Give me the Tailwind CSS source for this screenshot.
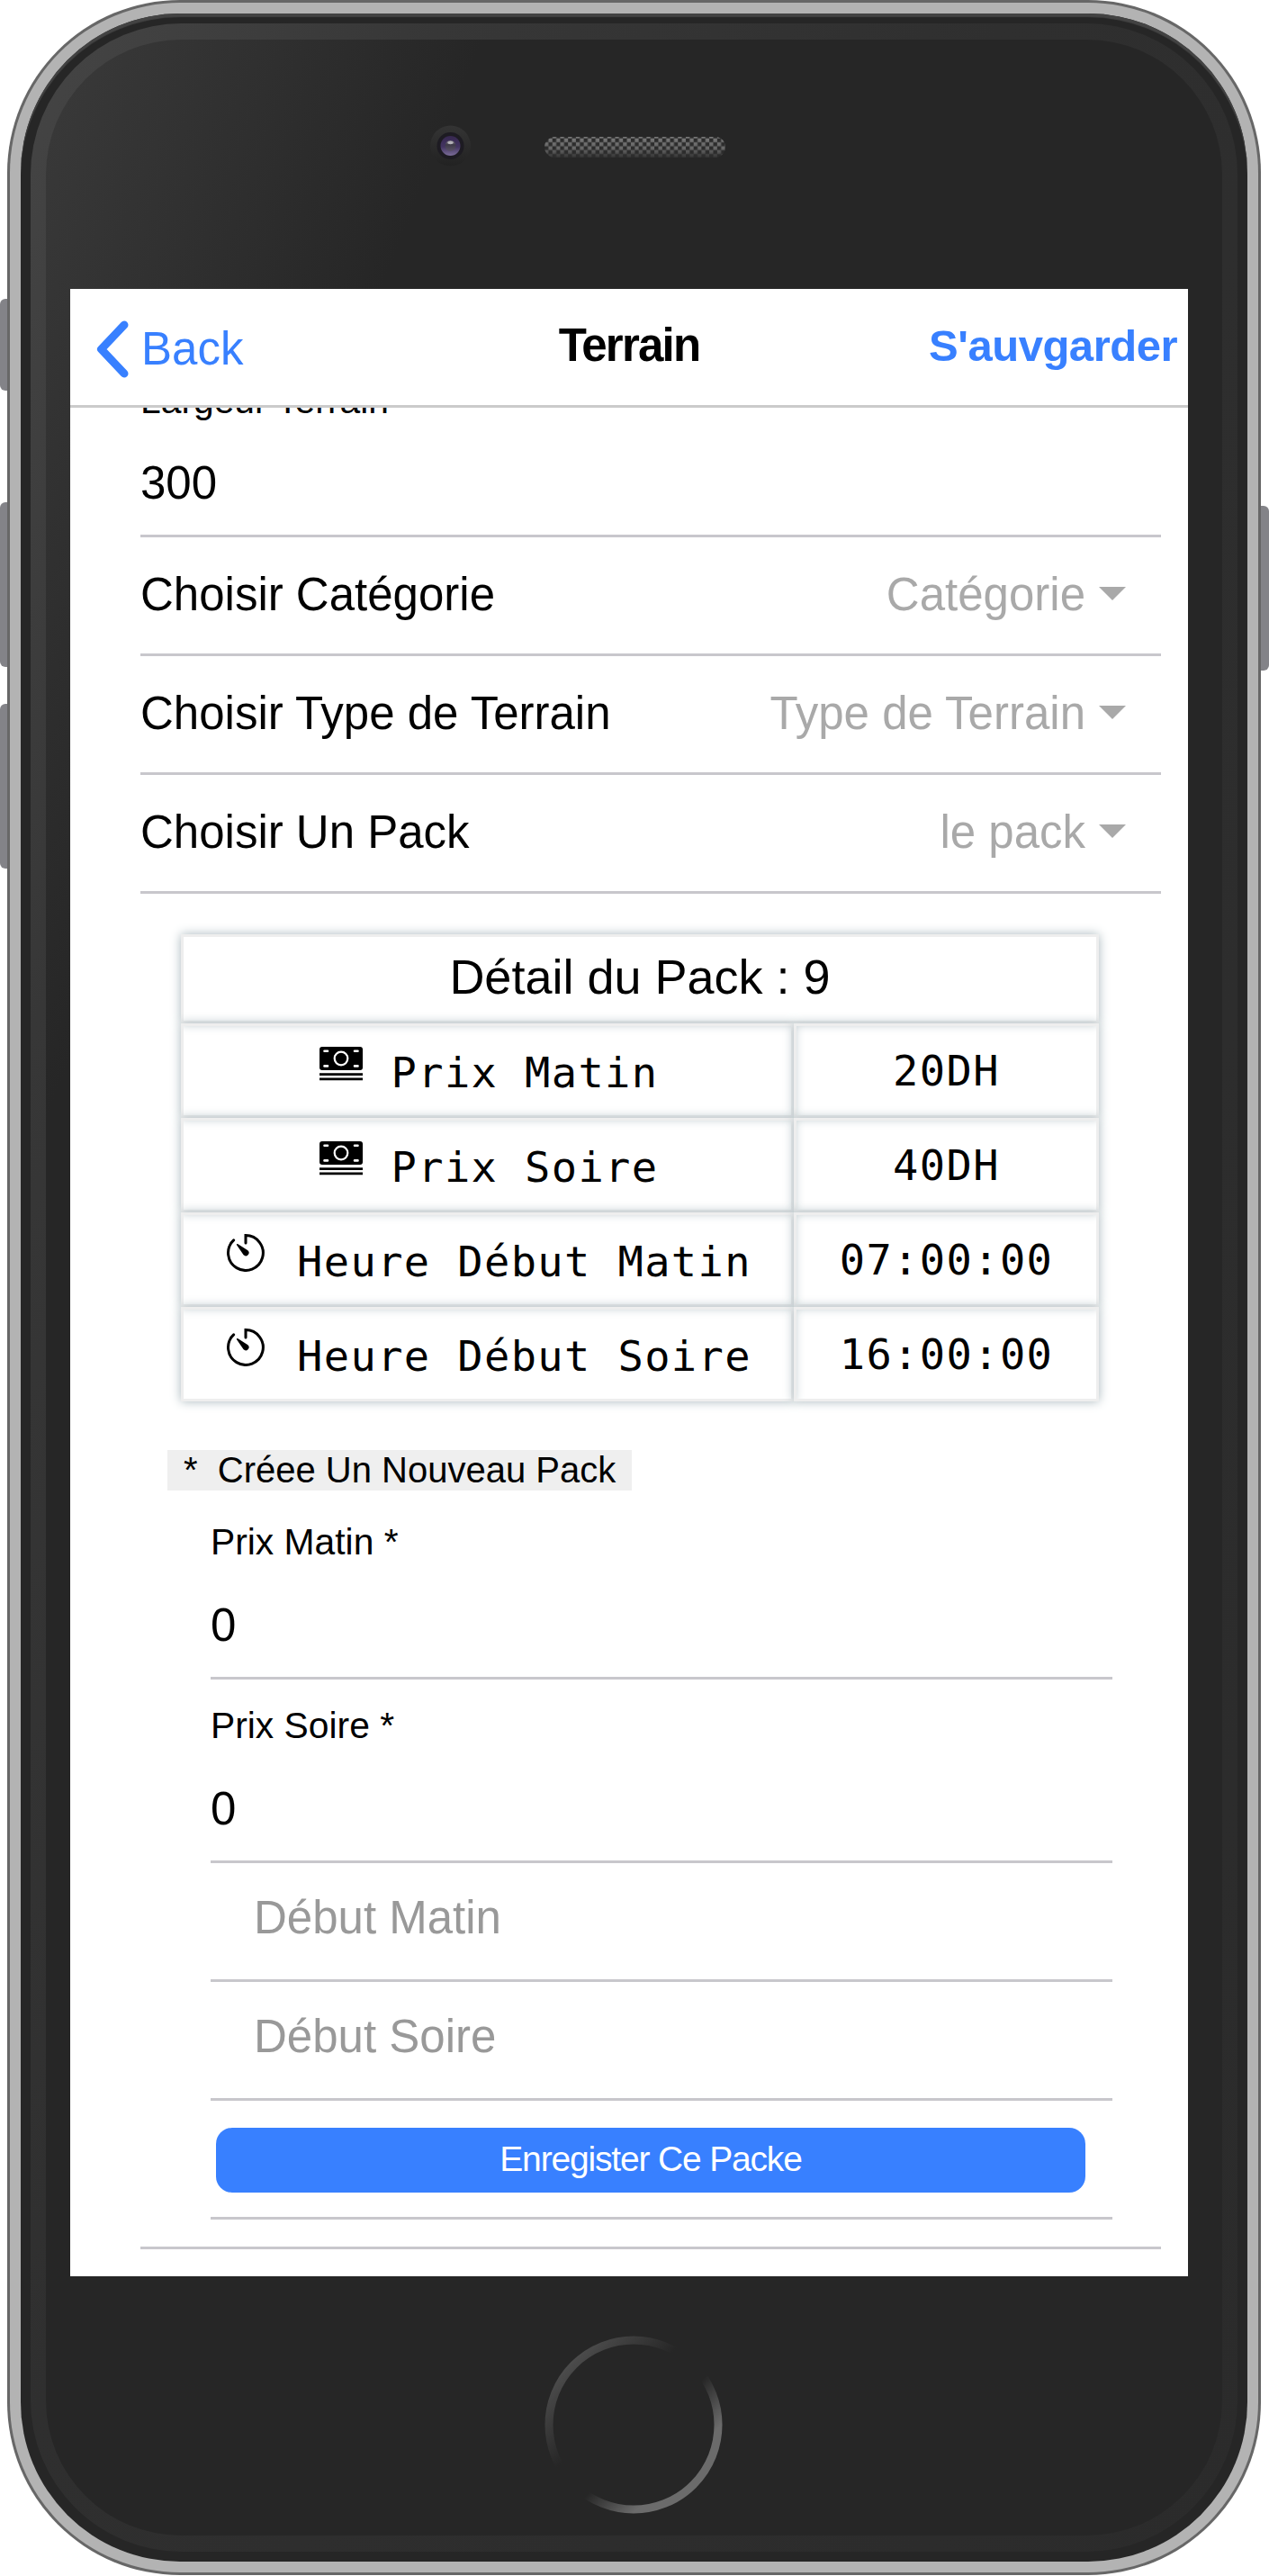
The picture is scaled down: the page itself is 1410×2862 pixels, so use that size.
<!DOCTYPE html>
<html lang="fr">
<head>
<meta charset="utf-8">
<title>Terrain</title>
<script src="https://cdn.jsdelivr.net/npm/@tailwindcss/browser@4"></script>
</head>
<body class="bg-white">
<div class="relative h-[2862px] w-[1410px] overflow-hidden pl-[8px]">
  <!-- side buttons -->
  <div class="absolute left-0 top-[332px] h-[102px] w-[20px] rounded-l-[6px] bg-[#838388]"></div>
  <div class="absolute left-0 top-[558px] h-[183px] w-[20px] rounded-l-[6px] bg-[#838388]"></div>
  <div class="absolute left-0 top-[782px] h-[183px] w-[20px] rounded-l-[6px] bg-[#838388]"></div>
  <div class="absolute right-0 top-[562px] h-[183px] w-[20px] rounded-r-[6px] bg-[#838388]"></div>

  <!-- phone body -->
  <div class="relative h-[2861px] w-[1393px] rounded-[192px] bg-[#676767] p-[3px]">
    <div class="h-full rounded-[189px] bg-[#b3b3b3] p-[12px]">
      <div class="h-full rounded-[177px] bg-[#262626] p-[11px] shadow-[inset_0_4px_1px_#434343]">
        <div class="h-full rounded-[168px] bg-[linear-gradient(112deg,#454545_0px,#373737_420px,#2f2f2f_1000px,#2b2b2b_100%)] px-[17px] py-[18px]">
          <div class="flex h-full flex-col rounded-[150px] bg-[linear-gradient(112deg,#3a3a3a_0px,#262626_450px)]">
            <!-- camera and speaker -->
            <svg class="h-[277px] w-[1306px] shrink-0" viewBox="51 44 1306 277">
              <defs>
                <linearGradient id="rim" x1="0" y1="0" x2="0" y2="1"><stop offset="0" stop-color="#343434"/><stop offset="1" stop-color="#222"/></linearGradient>
                <linearGradient id="lens" x1="0" y1="0" x2="0" y2="1"><stop offset="0" stop-color="#36274f"/><stop offset=".55" stop-color="#433461"/><stop offset="1" stop-color="#7b6d99"/></linearGradient>
                <linearGradient id="pupil" x1="0" y1="0" x2="0" y2="1"><stop offset="0" stop-color="#77737f"/><stop offset=".4" stop-color="#3e3a48"/><stop offset="1" stop-color="#5b5268"/></linearGradient>
                <linearGradient id="mesh" x1="0" y1="0" x2="0" y2="1"><stop offset="0" stop-color="#787878"/><stop offset=".6" stop-color="#666"/><stop offset="1" stop-color="#333"/></linearGradient>
                <pattern id="check" x="605" y="151" width="8.72" height="8.72" patternUnits="userSpaceOnUse"><rect width="8.72" height="8.72" fill="#000"/><rect x="4.36" y="2.7" width="4.36" height="4.36" fill="#fff"/><rect width="4.36" height="2.7" fill="#fff"/><rect y="7.06" width="4.36" height="1.66" fill="#fff"/></pattern>
                <mask id="holes"><rect x="605" y="152" width="201" height="23" rx="11.5" fill="url(#check)"/></mask>
              </defs>
              <circle cx="500.500" cy="162" r="22.500" fill="url(#rim)"/>
              <circle cx="500.500" cy="162" r="15" fill="#1d1b22"/>
              <circle cx="500.500" cy="162" r="11" fill="url(#lens)"/>
              <circle cx="500.500" cy="162" r="6" fill="url(#pupil)"/>
              <ellipse cx="500.500" cy="158.500" rx="3.200" ry="1.700" fill="#b4b1b8"/>
              <rect x="605" y="152" width="201" height="23" rx="11.5" fill="#2c2c2c"/>
              <rect x="605" y="152" width="201" height="23" fill="url(#mesh)" mask="url(#holes)"/>
            </svg>

            <!-- screen -->
            <div class="ml-[27px] flex h-[2208px] w-[1242px] shrink-0 flex-col overflow-hidden bg-white font-['Liberation_Sans',Arial,sans-serif] text-[51px] leading-[60px] text-black">
              <header class="grid h-[132px] shrink-0 grid-cols-3 items-center border-b-[3px] border-[#cbcbcb] pr-[12px]">
                <div class="flex items-center pl-[29px] pt-[4px] text-[#3880ff]">
                  <svg class="h-[66px] w-[37px]" viewBox="0 0 37 66" fill="none" stroke="currentColor" stroke-width="9" stroke-linecap="round" stroke-linejoin="round"><path d="M31 6 L5.500 33 L31 60"/></svg>
                  <span class="pl-[13px]">Back</span>
                </div>
                <div class="pb-[3px] pl-[12px] text-center font-bold tracking-[-0.035em]">Terrain</div>
                <div class="pb-[3px] text-right text-[49px] font-bold tracking-[-0.01em] text-[#3880ff]">S'auvgarder</div>
              </header>

              <main class="flex flex-col pl-[78px] pr-[30px]">
                <div class="flex h-[144px] flex-col border-b-[3px] border-[#c8c7cc]">
                  <div class="mt-[-32px] h-[48px] text-[40.8px] leading-[48px] [clip-path:inset(32px_0_0_0)]">Largeur Terrain</div>
                  <div class="pt-[38px]">300</div>
                </div>
                <div class="flex h-[132px] items-center border-b-[3px] border-[#c8c7cc] pb-[2px] pr-[39px]">
                  <span class="flex-1">Choisir Catégorie</span><span class="text-[#a9a9a9]">Catégorie</span>
                  <svg class="mb-[2px] ml-[15px] h-[15px] w-[30px]" viewBox="0 0 30 15"><path d="M0 0H30L15 15Z" fill="#a9a9a9"/></svg>
                </div>
                <div class="flex h-[132px] items-center border-b-[3px] border-[#c8c7cc] pb-[2px] pr-[39px]">
                  <span class="flex-1">Choisir Type de Terrain</span><span class="text-[#a9a9a9]">Type de Terrain</span>
                  <svg class="mb-[2px] ml-[15px] h-[15px] w-[30px]" viewBox="0 0 30 15"><path d="M0 0H30L15 15Z" fill="#a9a9a9"/></svg>
                </div>
                <div class="flex h-[132px] items-center border-b-[3px] border-[#c8c7cc] pb-[2px] pr-[39px]">
                  <span class="flex-1">Choisir Un Pack</span><span class="text-[#a9a9a9]">le pack</span>
                  <svg class="mb-[2px] ml-[15px] h-[15px] w-[30px]" viewBox="0 0 30 15"><path d="M0 0H30L15 15Z" fill="#a9a9a9"/></svg>
                </div>

                <div class="flex h-[1506px] flex-col border-b-[3px] border-[#c8c7cc] pt-[45px]">
                  <!-- pack detail -->
                  <div class="ml-[45px] grid w-[1020px] grid-cols-[681px_339px] grid-rows-[99px_105px_105px_105px_105px] font-['DejaVu_Sans_Mono',monospace] text-[47px] tracking-[1.4px]">
                    <div class="col-span-2 flex items-center justify-center border-[3px] border-[#eee] pb-[6px] font-['Liberation_Sans',Arial,sans-serif] text-[54px] tracking-normal shadow-[0_0_11px_#a9b7bd]">Détail du Pack : 9</div>

                    <div class="flex items-center justify-center gap-[32px] border-[3px] border-[#eee] pl-[3px] pt-[5px] shadow-[0_0_11px_#a9b7bd]">
                      <svg class="mb-[20px] h-[38px] w-[48px]" viewBox="0 0 48 38"><rect width="48" height="26" rx="3"/><path d="M0 29.300h48v2.600H0zM0 34.400h48v2.800H0z"/><circle cx="24" cy="13" r="7.300" fill="none" stroke="#fff" stroke-width="2.200"/><path d="M5.500 4.800H9M39 4.800h3.500M5.500 21.400H9M39 21.400h3.500" stroke="#fff" stroke-width="2.600" stroke-linecap="round"/></svg>
                      <span>Prix Matin</span>
                    </div>
                    <div class="flex items-center justify-center border-[3px] border-[#eee] shadow-[0_0_11px_#a9b7bd]">20DH</div>

                    <div class="flex items-center justify-center gap-[32px] border-[3px] border-[#eee] pl-[3px] pt-[5px] shadow-[0_0_11px_#a9b7bd]">
                      <svg class="mb-[20px] h-[38px] w-[48px]" viewBox="0 0 48 38"><rect width="48" height="26" rx="3"/><path d="M0 29.300h48v2.600H0zM0 34.400h48v2.800H0z"/><circle cx="24" cy="13" r="7.300" fill="none" stroke="#fff" stroke-width="2.200"/><path d="M5.500 4.800H9M39 4.800h3.500M5.500 21.400H9M39 21.400h3.500" stroke="#fff" stroke-width="2.600" stroke-linecap="round"/></svg>
                      <span>Prix Soire</span>
                    </div>
                    <div class="flex items-center justify-center border-[3px] border-[#eee] shadow-[0_0_11px_#a9b7bd]">40DH</div>

                    <div class="flex items-center justify-center gap-[36px] border-[3px] border-[#eee] pl-[4px] pt-[5px] shadow-[0_0_11px_#a9b7bd]">
                      <svg class="mb-[21px] h-[42px] w-[42px]" viewBox="0 0 42 42"><path d="M21 10V1.600A19.400 19.400 0 1 1 7.600 6.900" fill="none" stroke="#000" stroke-width="3" stroke-linecap="round"/><path d="M10.700 11.700Q11.300 10.700 12.500 11.300L23.400 18.200A3.400 3.400 0 1 1 18.600 23.300Z"/></svg>
                      <span>Heure Début Matin</span>
                    </div>
                    <div class="flex items-center justify-center border-[3px] border-[#eee] shadow-[0_0_11px_#a9b7bd]">07:00:00</div>

                    <div class="flex items-center justify-center gap-[36px] border-[3px] border-[#eee] pl-[4px] pt-[5px] shadow-[0_0_11px_#a9b7bd]">
                      <svg class="mb-[21px] h-[42px] w-[42px]" viewBox="0 0 42 42"><path d="M21 10V1.600A19.400 19.400 0 1 1 7.600 6.900" fill="none" stroke="#000" stroke-width="3" stroke-linecap="round"/><path d="M10.700 11.700Q11.300 10.700 12.500 11.300L23.400 18.200A3.400 3.400 0 1 1 18.600 23.300Z"/></svg>
                      <span>Heure Début Soire</span>
                    </div>
                    <div class="flex items-center justify-center border-[3px] border-[#eee] shadow-[0_0_11px_#a9b7bd]">16:00:00</div>
                  </div>

                  <!-- new pack form -->
                  <button class="ml-[30px] mt-[54px] h-[45px] w-[516px] shrink-0 whitespace-nowrap bg-[#efefef] px-[18px] text-left text-[40px] leading-[45px]">*&nbsp; Créee Un Nouveau Pack</button>

                  <div class="ml-[78px] mr-[54px] flex flex-col">
                    <div class="h-[210px] border-b-[3px] border-[#c8c7cc] pt-[33px]">
                      <div class="text-[40.8px] leading-[48px]">Prix Matin *</div>
                      <div class="pt-[39px]">0</div>
                    </div>
                    <div class="h-[204px] border-b-[3px] border-[#c8c7cc] pt-[27px]">
                      <div class="text-[40.8px] leading-[48px]">Prix Soire *</div>
                      <div class="pt-[39px]">0</div>
                    </div>
                    <div class="flex h-[132px] items-center border-b-[3px] border-[#c8c7cc] pb-[8px] pl-[48px] text-[#999]">Début Matin</div>
                    <div class="flex h-[132px] items-center border-b-[3px] border-[#c8c7cc] pb-[8px] pl-[48px] text-[#999]">Début Soire</div>
                    <div class="h-[132px] border-b-[3px] border-[#c8c7cc] pl-[6px] pr-[30px] pt-[30px]">
                      <button class="h-[72px] w-full rounded-[18px] bg-[#3880ff] pb-[2px] text-[39px] leading-[70px] tracking-[-0.03em] text-white">Enregister Ce Packe</button>
                    </div>
                  </div>
                </div>
              </main>
            </div>

            <!-- home button -->
            <div class="flex justify-center pr-[1px] pt-[66px]">
              <svg class="h-[198px] w-[198px]" viewBox="0 0 198 198"><defs><linearGradient id="ring" x1="0" y1="0" x2="1" y2="1"><stop offset=".1" stop-color="#505050"/><stop offset=".4" stop-color="#262626"/><stop offset=".57" stop-color="#262626"/><stop offset=".76" stop-color="#6b6b6b"/></linearGradient></defs><circle cx="99" cy="99" r="94" fill="none" stroke="url(#ring)" stroke-width="9"/></svg>
            </div>
          </div>
        </div>
      </div>
    </div>
  </div>
</div>
</body>
</html>
